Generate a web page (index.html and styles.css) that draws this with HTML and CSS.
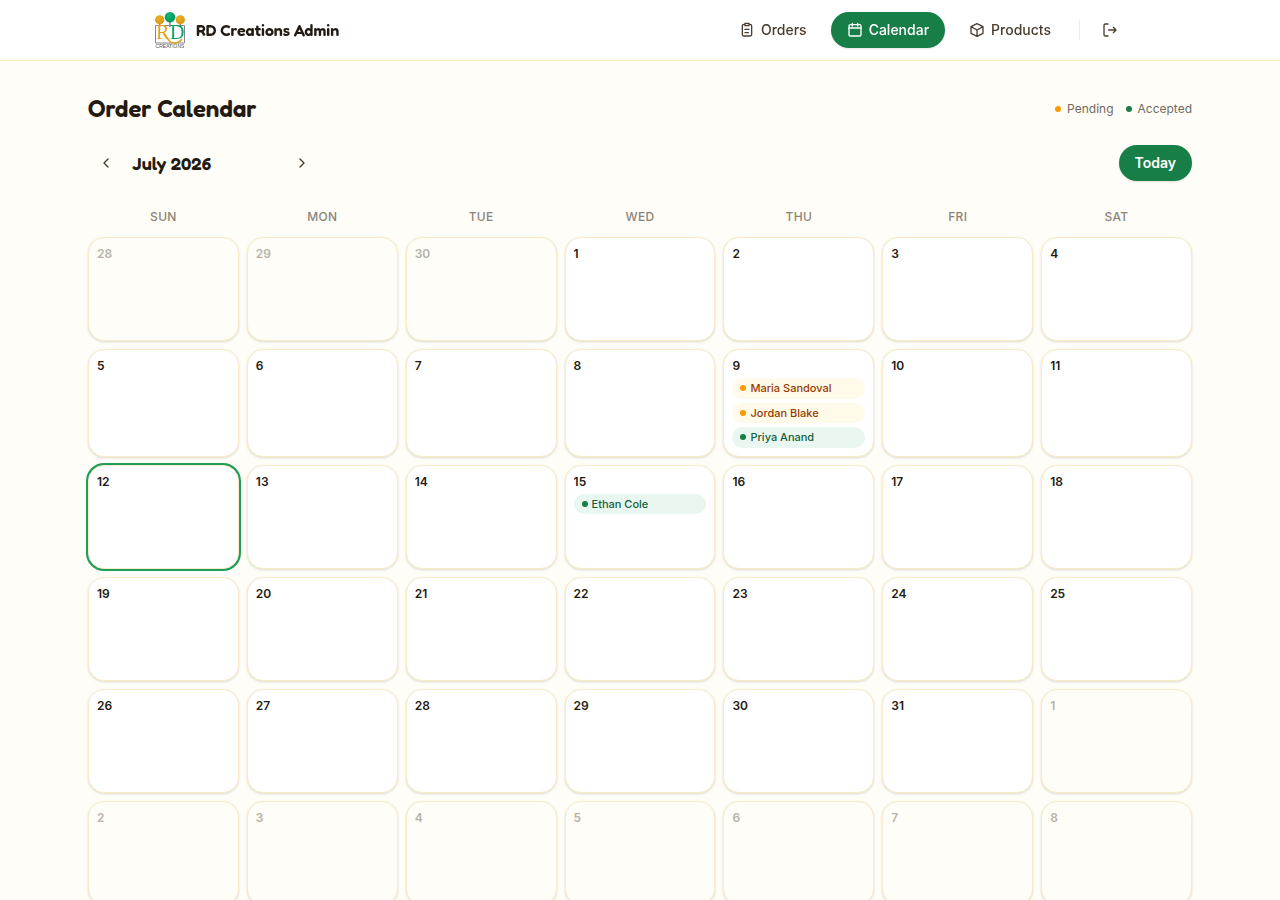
FILE: index.html
```html
<!DOCTYPE html>
<html lang="en">
<head>
<meta charset="utf-8">
<meta name="viewport" content="width=device-width, initial-scale=1">
<title>Order Calendar</title>
<link rel="stylesheet" href="styles.css">
</head>
<body>
<header class="site-header">
  <div class="header-inner">
    <a class="brand" href="#">
      <svg class="logo" viewBox="0 0 36 36" role="img" aria-label="RD Creations">
        <defs>
          <radialGradient id="gold" cx="40%" cy="35%"><stop offset="0" stop-color="#f0b128"/><stop offset="1" stop-color="#d99a17"/></radialGradient>
          <radialGradient id="leaf" cx="40%" cy="35%"><stop offset="0" stop-color="#12b877"/><stop offset="1" stop-color="#069a5c"/></radialGradient>
        </defs>
        <path d="M7.700 11v4M18 9v6M28.300 11v4" stroke="#7a6a45" stroke-width="1.200"/>
        <path d="M3.500 13.500h29v17.500h-29z" fill="none" stroke="#85858c" stroke-width="1"/>
        <circle cx="7.700" cy="7.800" r="4.600" fill="url(#gold)"/>
        <circle cx="28.300" cy="7.800" r="4.600" fill="url(#gold)"/>
        <circle cx="18" cy="5.300" r="5.300" fill="url(#leaf)"/>
        <text class="logo-r" x="4" y="27">R</text>
        <text class="logo-d" x="18" y="27">D</text>
        <path d="M13 22c2 5 5 9 9 9 3.500 0 6-1 8-4" fill="none" stroke="#e0a526" stroke-width="1.600"/>
        <text class="logo-name" x="18" y="36">CREATIONS</text>
      </svg>
      <span>RD Creations Admin</span>
    </a>
    <nav class="nav" aria-label="Main">
      <a class="nav-link" href="#">
        <svg class="icon" viewBox="0 0 24 24"><path d="M9 2h6v3.500H9zM15 3.500h1.500A2.500 2.500 0 0 1 19 6v12.500a2.500 2.500 0 0 1-2.500 2.500h-9A2.500 2.500 0 0 1 5 18.500V6a2.500 2.500 0 0 1 2.500-2.500H9M9 11h6M9 16h5"/></svg>
        Orders
      </a>
      <a class="nav-link active" href="#" aria-current="page">
        <svg class="icon" viewBox="0 0 24 24"><path d="M8 2v4M16 2v4M3 9h18"/><rect x="3" y="4" width="18" height="17" rx="2"/></svg>
        Calendar
      </a>
      <a class="nav-link" href="#">
        <svg class="icon" viewBox="0 0 24 24"><path d="M12 2.500l9 4.500v10l-9 4.500L3 17V7zM3 7l9 5 9-5M12 21.500V12"/></svg>
        Products
      </a>
      <span class="divider"></span>
      <button class="icon-button" type="button" aria-label="Log out">
        <svg class="icon" viewBox="0 0 24 24"><path d="M9 21H5a2 2 0 0 1-2-2V5a2 2 0 0 1 2-2h4M17 8l4 4-4 4M21 12H10"/></svg>
      </button>
    </nav>
  </div>
</header>
<main class="page">
  <div class="title-row">
    <h1>Order Calendar</h1>
    <div class="legend">
      <span class="legend-item"><i class="dot pending"></i>Pending</span>
      <span class="legend-item"><i class="dot accepted"></i>Accepted</span>
    </div>
  </div>
  <div class="toolbar">
    <div class="month-nav">
      <button class="icon-button" type="button" aria-label="Previous month"><svg class="icon" viewBox="0 0 24 24"><path d="m15 18-6-6 6-6"/></svg></button>
      <h2>July 2026</h2>
      <button class="icon-button" type="button" aria-label="Next month"><svg class="icon" viewBox="0 0 24 24"><path d="m9 18 6-6-6-6"/></svg></button>
    </div>
    <button class="today-button" type="button">Today</button>
  </div>
  <div class="weekdays">
    <div>SUN</div><div>MON</div><div>TUE</div><div>WED</div><div>THU</div><div>FRI</div><div>SAT</div>
  </div>
  <div class="days">
    <div class="day outside">28</div><div class="day outside">29</div><div class="day outside">30</div><div class="day">1</div><div class="day">2</div><div class="day">3</div><div class="day">4</div>
    <div class="day">5</div><div class="day">6</div><div class="day">7</div><div class="day">8</div>
    <div class="day">9
      <div class="orders">
        <a class="order pending-order" href="#"><i class="dot pending"></i>Maria Sandoval</a>
        <a class="order pending-order" href="#"><i class="dot pending"></i>Jordan Blake</a>
        <a class="order accepted-order" href="#"><i class="dot accepted"></i>Priya Anand</a>
      </div>
    </div>
    <div class="day">10</div><div class="day">11</div>
    <div class="day today">12</div><div class="day">13</div><div class="day">14</div>
    <div class="day">15
      <div class="orders">
        <a class="order accepted-order" href="#"><i class="dot accepted"></i>Ethan Cole</a>
      </div>
    </div>
    <div class="day">16</div><div class="day">17</div><div class="day">18</div>
    <div class="day">19</div><div class="day">20</div><div class="day">21</div><div class="day">22</div><div class="day">23</div><div class="day">24</div><div class="day">25</div>
    <div class="day">26</div><div class="day">27</div><div class="day">28</div><div class="day">29</div><div class="day">30</div><div class="day">31</div><div class="day outside">1</div>
    <div class="day outside">2</div><div class="day outside">3</div><div class="day outside">4</div><div class="day outside">5</div><div class="day outside">6</div><div class="day outside">7</div><div class="day outside">8</div>
  </div>
</main>
</body>
</html>
```
FILE: styles.css
```css
* { box-sizing: border-box; }
html { scrollbar-width: none; }
body {
  margin: 0;
  background: #fffdf7;
  color: #231a12;
  font-family: Inter, "Liberation Sans", sans-serif;
  font-size: 14px;
  line-height: 20px;
}
a { color: inherit; text-decoration: none; }
button { font: inherit; border: 0; cursor: pointer; }
h1, h2, .brand { font-family: Fredoka, Lato, sans-serif; font-weight: 600; }
h1, h2 { margin: 0; }

.site-header {
  position: sticky;
  top: 0;
  z-index: 1;
  background: rgba(255, 255, 255, 0.95);
  backdrop-filter: blur(8px);
  border-bottom: 1px solid #fbebc4;
}
.header-inner {
  display: flex;
  align-items: center;
  justify-content: space-between;
  max-width: 1024px;
  margin: 0 auto;
  padding: 12px 24px;
}
.brand { display: flex; align-items: center; gap: 8px; font-size: 16px; }
.logo { width: 36px; height: 36px; }
.logo-r, .logo-d { font: 20px "Liberation Serif", serif; }
.logo-r { fill: #e0a526; }
.logo-d { fill: #0aa566; }
.logo-name { font: 5px "Liberation Sans", sans-serif; fill: #555; text-anchor: middle; }
.nav { display: flex; align-items: center; gap: 8px; }
.nav-link {
  display: flex;
  align-items: center;
  gap: 6px;
  padding: 8px 16px;
  border-radius: 18px;
  color: #4a3d2f;
  font-weight: 500;
}
.nav-link.active, .today-button {
  background: #177e48;
  color: #fff;
  box-shadow: 0 1px 2px rgba(35, 26, 18, 0.12);
}
.icon {
  width: 16px;
  height: 16px;
  fill: none;
  stroke: currentColor;
  stroke-width: 2;
  stroke-linecap: round;
  stroke-linejoin: round;
}
.divider { width: 1px; height: 20px; margin: 0 4px; background: #fbebc4; }
.icon-button {
  display: grid;
  place-items: center;
  width: 36px;
  height: 36px;
  padding: 0;
  border-radius: 18px;
  background: transparent;
  color: #4a3d2f;
}

.page { max-width: 1152px; margin: 0 auto; padding: 32px 24px; }
.title-row, .toolbar { display: flex; align-items: center; justify-content: space-between; }
h1 { font-size: 24px; line-height: 32px; }
.legend { display: flex; gap: 12px; font-size: 12px; line-height: 16px; color: #736a60; }
.legend-item { display: flex; align-items: center; gap: 6px; }
.dot { flex: none; width: 6px; height: 6px; border-radius: 50%; }
.pending { background: #fe9a00; }
.accepted { background: #177e48; }
.toolbar { margin: 20px 0 24px; }
.month-nav { display: flex; align-items: center; gap: 8px; }
h2 { width: 144px; font-size: 18px; line-height: 28px; }
.today-button { padding: 8px 16px; border-radius: 18px; font-weight: 600; }

.weekdays, .days { display: grid; grid-template-columns: repeat(7, minmax(0, 1fr)); gap: 8px; }
.weekdays {
  margin-bottom: 8px;
  padding: 4px 0;
  font-size: 12px;
  font-weight: 500;
  line-height: 16px;
  letter-spacing: 0.025em;
  text-align: center;
  color: #8b8378;
}
.day {
  min-height: 104px;
  padding: 8px;
  border: 1px solid #f9ebc8;
  border-radius: 16px;
  background: #fff;
  box-shadow: 0 1px 3px rgba(35, 26, 18, 0.1), 0 1px 2px rgba(35, 26, 18, 0.06);
  font-size: 12px;
  font-weight: 600;
  line-height: 16px;
}
.outside { background: #fffdf7; color: #b8b2aa; }
.today { box-shadow: 0 0 0 2px #1f9d5a; }
.orders { display: grid; gap: 4px; margin-top: 4px; }
.order {
  display: flex;
  align-items: center;
  gap: 4px;
  padding: 2px 8px;
  border-radius: 12px;
  font-size: 11px;
  font-weight: 500;
  line-height: 1.5;
}
.pending-order { background: #fffaea; color: #973c00; }
.accepted-order { background: #e9f7f0; color: #14603c; }
```
